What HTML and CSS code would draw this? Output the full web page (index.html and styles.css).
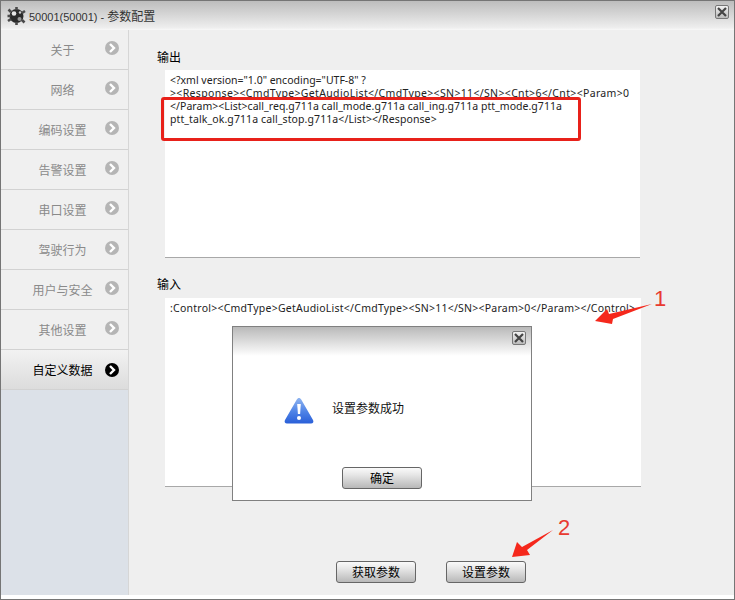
FILE: index.html
```html
<!DOCTYPE html>
<html lang="zh">
<head>
<meta charset="utf-8">
<title>参数配置</title>
<link rel="stylesheet" href="styles.css">
</head>
<body>
<div class="window">
  <header class="titlebar">
    <svg class="logo" width="20" height="20" viewBox="0 0 20 20">
      <circle cx="10.500" cy="10" r="7" fill="#2b2b2b"/>
      <path d="M10.500 1v3M10.500 16v3M2.500 3.500l2.500 2.500M16 14l2.500 2.500M2 15l3-2M16 7l3-2M1.500 10h3" stroke="#4a4a4a" stroke-width="2.600"/>
      <circle cx="8" cy="7.500" r="2.300" fill="#e8e8e8"/>
      <circle cx="13.500" cy="13" r="2" fill="#9a9a9a"/>
      <circle cx="14" cy="6.500" r="1.200" fill="#cfcfcf"/>
    </svg>
    <span class="title">50001(50001) - <span class="title-cjk">参数配置</span></span>
    <button class="close close-main" aria-label="关闭"><svg width="10" height="10" viewBox="0 0 10 10"><path d="M1 1l8 8M9 1l-8 8" stroke="#444" stroke-width="2.200"/></svg></button>
  </header>
  <div class="body">
    <nav class="sidebar">
      <a class="nav-item"><span>关于</span><i class="chev"><svg width="14" height="14" viewBox="0 0 14 14"><path d="M5 3l4 4-4 4" fill="none" stroke="#fff" stroke-width="2.400"/></svg></i></a>
      <a class="nav-item"><span>网络</span><i class="chev"><svg width="14" height="14" viewBox="0 0 14 14"><path d="M5 3l4 4-4 4" fill="none" stroke="#fff" stroke-width="2.400"/></svg></i></a>
      <a class="nav-item"><span>编码设置</span><i class="chev"><svg width="14" height="14" viewBox="0 0 14 14"><path d="M5 3l4 4-4 4" fill="none" stroke="#fff" stroke-width="2.400"/></svg></i></a>
      <a class="nav-item"><span>告警设置</span><i class="chev"><svg width="14" height="14" viewBox="0 0 14 14"><path d="M5 3l4 4-4 4" fill="none" stroke="#fff" stroke-width="2.400"/></svg></i></a>
      <a class="nav-item"><span>串口设置</span><i class="chev"><svg width="14" height="14" viewBox="0 0 14 14"><path d="M5 3l4 4-4 4" fill="none" stroke="#fff" stroke-width="2.400"/></svg></i></a>
      <a class="nav-item"><span>驾驶行为</span><i class="chev"><svg width="14" height="14" viewBox="0 0 14 14"><path d="M5 3l4 4-4 4" fill="none" stroke="#fff" stroke-width="2.400"/></svg></i></a>
      <a class="nav-item"><span>用户与安全</span><i class="chev"><svg width="14" height="14" viewBox="0 0 14 14"><path d="M5 3l4 4-4 4" fill="none" stroke="#fff" stroke-width="2.400"/></svg></i></a>
      <a class="nav-item"><span>其他设置</span><i class="chev"><svg width="14" height="14" viewBox="0 0 14 14"><path d="M5 3l4 4-4 4" fill="none" stroke="#fff" stroke-width="2.400"/></svg></i></a>
      <a class="nav-item active"><span>自定义数据</span><i class="chev"><svg width="14" height="14" viewBox="0 0 14 14"><path d="M5 3l4 4-4 4" fill="none" stroke="#fff" stroke-width="2.400"/></svg></i></a>
    </nav>
    <main class="content">
      <h2 class="label">输出</h2>
      <div class="box box-out">
        <div>&lt;?xml version="1.0" encoding="UTF-8" ?</div>
        <div class="track-wide">&gt;&lt;Response&gt;&lt;CmdType&gt;GetAudioList&lt;/CmdType&gt;&lt;SN&gt;11&lt;/SN&gt;&lt;Cnt&gt;6&lt;/Cnt&gt;&lt;Param&gt;0</div>
        <div class="track-slight">&lt;/Param&gt;&lt;List&gt;call_req.g711a call_mode.g711a call_ing.g711a ptt_mode.g711a</div>
        <div class="track-small">ptt_talk_ok.g711a call_stop.g711a&lt;/List&gt;&lt;/Response&gt;</div>
      </div>
      <h2 class="label label-in">输入</h2>
      <div class="box box-in track-mid">:Control&gt;&lt;CmdType&gt;GetAudioList&lt;/CmdType&gt;&lt;SN&gt;11&lt;/SN&gt;&lt;Param&gt;0&lt;/Param&gt;&lt;/Control&gt;</div>
      <div class="actions">
        <button class="btn">获取参数</button>
        <button class="btn">设置参数</button>
      </div>
    </main>
  </div>
</div>

<section class="dialog">
  <div class="dialog-head">
    <button class="close" aria-label="关闭"><svg width="10" height="10" viewBox="0 0 10 10"><path d="M1 1l8 8M9 1l-8 8" stroke="#444" stroke-width="2.200"/></svg></button>
  </div>
  <div class="dialog-msg">
    <svg width="30" height="28" viewBox="1 1 30 28">
      <defs><linearGradient id="warn" x1="0" y1="0" x2="0" y2="1"><stop offset="0" stop-color="#8fb4f0"/><stop offset="0.550" stop-color="#4d82e6"/><stop offset="1" stop-color="#2a5fd8"/></linearGradient></defs>
      <path d="M16 2c1 0 1.700.6 2.200 1.500L30 24c1 1.900 0 3.500-2 3.500H4c-2 0-3-1.600-2-3.500L13.800 3.500C14.300 2.600 15 2 16 2z" fill="url(#warn)"/>
      <path d="M14.200 8h3.600l-.7 10h-2.200z" fill="#fff"/>
      <circle cx="16" cy="22" r="2" fill="#fff"/>
    </svg>
    <p>设置参数成功</p>
  </div>
  <button class="btn dialog-btn">确定</button>
</section>

<div class="highlight"></div>
<svg class="annot" width="735" height="600" viewBox="0 0 735 600">
  <path d="M595 321L607 309L609 314L652 304L613 319L612 324Z" fill="#f5281c"/>
  <path d="M512 557L517 542L522 547L553 530L527 550L530 555Z" fill="#f5281c"/>
</svg>
<span class="num num-one">1</span>
<span class="num num-two">2</span>
</body>
</html>
```
FILE: styles.css
```css
* { box-sizing: border-box; }
html, body { margin: 0; padding: 0; }
body {
  width: 735px;
  height: 600px;
  overflow: hidden;
  background: #fff;
  position: relative;
  font-family: "Liberation Sans", "Noto Sans CJK SC", sans-serif;
  font-size: 12px;
  color: #111;
}
.window {
  width: 735px;
  height: 600px;
  border: 1px solid #757575;
  display: flex;
  flex-direction: column;
  background: #fff;
}
.titlebar {
  height: 29px;
  flex: none;
  display: flex;
  align-items: center;
  padding: 0 5px 0 5px;
  background: linear-gradient(#bdbdbd, #eeeeee 92%, #f8f8f8);
}
.logo { flex: none; margin-right: 3px; }
.title { font-size: 11px; color: #333; }
.title-cjk { font-size: 12px; }
.close {
  width: 14px;
  height: 14px;
  padding: 0;
  border: 1px solid #777;
  border-radius: 2px;
  background: linear-gradient(#f2f2f2, #bbb);
  display: flex;
  align-items: center;
  justify-content: center;
}
.close-main { margin-left: auto; align-self: flex-start; margin-top: 4px; }
.body {
  flex: 1;
  display: flex;
  min-height: 0;
  margin-bottom: 4px;
  background: #efefef;
}
.sidebar {
  width: 128px;
  flex: none;
  background: #dce1e8;
  border-right: 1px solid #d6d6d6;
}
.nav-item {
  height: 40px;
  display: flex;
  align-items: center;
  padding-left: 23px;
  gap: 4px;
  background: #f0f0f0;
  border-bottom: 1px solid #d2d2d2;
  color: #8a8a8a;
  font-size: 12px;
}
.nav-item span { width: 77px; text-align: center; }
.chev {
  width: 14px;
  height: 14px;
  margin-bottom: 3px;
  border-radius: 50%;
  background: #b5b5b5;
  display: block;
}
.chev svg { display: block; }
.nav-item.active {
  background: linear-gradient(#f2f2f2, #dcdcdc);
  color: #000;
}
.nav-item.active .chev { background: #000; margin-bottom: 0; }
.content {
  flex: 1;
  min-width: 0;
  display: flex;
  flex-direction: column;
  padding: 20px 0 0 28px;
}
.label {
  margin: 0;
  font-size: 12px;
  font-weight: 400;
  line-height: 16px;
  color: #000;
}
.box {
  margin: 4px 0 0 8px;
  padding: 4px 5px;
  background: #fff;
  font-family: "Noto Sans", "Liberation Sans", sans-serif;
  font-size: 10.500px;
  line-height: 13px;
  white-space: nowrap;
  overflow: hidden;
  width: 476px;
  color: #222;
}
.track-wide { letter-spacing: 0.340px; }
.track-mid { letter-spacing: 0.240px; }
.track-small { letter-spacing: 0.100px; }
.track-slight { letter-spacing: 0.040px; }
.box-out { height: 188px; width: 475px; border-bottom: 1px solid #a8a8a8; }
.label-in { margin-top: 19px; }
.box-in { height: 189px; margin-top: 5px; border-bottom: 1px solid #a8a8a8; }
.actions {
  display: flex;
  gap: 30px;
  margin: 74px 0 0 179px;
}
.btn {
  width: 80px;
  height: 22px;
  padding: 0 0 2px;
  border: 1px solid #666;
  border-radius: 3px;
  background: linear-gradient(#fafafa, #e6e6e6 35%, #b8b8b8);
  font: inherit;
  color: #000;
}
.dialog {
  position: absolute;
  left: 232px;
  top: 326px;
  width: 300px;
  height: 175px;
  background: #fff;
  border: 1px solid #808080;
  display: flex;
  flex-direction: column;
}
.dialog-head {
  height: 29px;
  flex: none;
  display: flex;
  justify-content: flex-end;
  padding: 4px 5px 0 0;
  background: linear-gradient(#b9b9b9, #fff);
}
.dialog-msg {
  display: flex;
  align-items: center;
  gap: 18px;
  margin: 41px 0 0 51px;
}
.dialog-msg p { margin: 0; font-size: 12px; color: #111; position: relative; top: -4px; }
.dialog-btn { margin: 42px 0 0 109px; }
.highlight {
  position: absolute;
  left: 161px;
  top: 97px;
  width: 420px;
  height: 44px;
  border: 3px solid #e8211a;
  border-radius: 3px;
}
.annot { position: absolute; left: 0; top: 0; pointer-events: none; }
.num { position: absolute; font-size: 22px; line-height: 22px; color: #e83a30; }
.num-one { left: 654px; top: 288px; }
.num-two { left: 558px; top: 517px; }
```
